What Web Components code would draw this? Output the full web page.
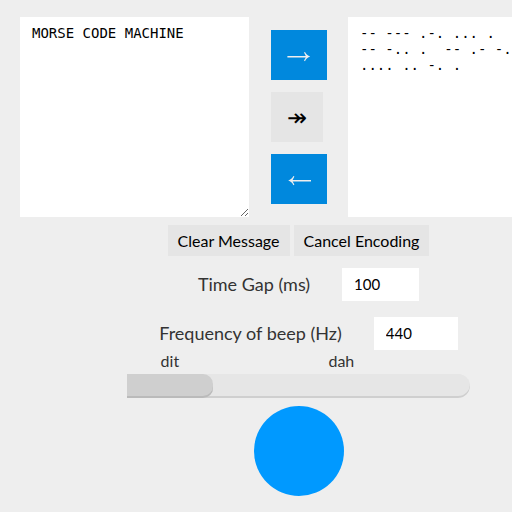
<!DOCTYPE html>
<html lang="en">
<head>
<meta charset="utf-8">
<title>Morse Code Machine</title>
<style>
html { background: #eee; }
body { margin: 0; font-family: Lato, "DejaVu Sans", sans-serif; font-size: 16px; color: #333; }
</style>
</head>
<body>
<morse-app></morse-app>
<script>
class Base extends HTMLElement {
  constructor() {
    super();
    this.attachShadow({ mode: "open" });
  }
  render(html) { this.shadowRoot.innerHTML = html; }
}

customElements.define("morse-text", class extends Base {
  connectedCallback() {
    this.render(`<style>
      :host { display: block; }
      textarea { display: block; box-sizing: border-box; width: 229px; height: 200px; margin: 0; padding: 8px 12px; border: 0; outline: 0; background: #fff; color: #000; font: 14px/16px "DejaVu Sans Mono", monospace; resize: both; white-space: pre; overflow: hidden; }
    </style><textarea aria-label="${this.getAttribute("label")}"></textarea>`);
    this.shadowRoot.querySelector("textarea").value = this.getAttribute("value").replaceAll("|", "\n");
  }
});

customElements.define("morse-arrow", class extends Base {
  connectedCallback() {
    this.render(`<style>
      :host { display: block; }
      button { display: block; height: 50px; margin: 0; padding: 0 16px; border: 0; background: #e5e5e5; color: #000; font: 24px/50px Lato, "DejaVu Sans", sans-serif; }
      :host([primary]) button { background: #08d; color: #eee; }
      ::slotted(svg) { display: block; width: 24px; height: 24px; }
    </style><button type="button" aria-label="${this.getAttribute("label")}"><slot></slot></button>`);
  }
});

customElements.define("morse-button", class extends Base {
  connectedCallback() {
    this.render(`<style>
      :host { display: block; }
      button { display: block; height: 31px; margin: 0; padding: 0 10px; border: 0; background: #e5e5e5; color: #000; font: 16px/31px Lato, sans-serif; }
    </style><button type="button"><slot></slot></button>`);
  }
});

customElements.define("morse-field", class extends Base {
  connectedCallback() {
    this.render(`<style>
      :host { display: flex; align-items: center; justify-content: center; gap: 32px; height: 33px; padding-left: 20px; }
      label { padding-bottom: 2px; font-size: 18px; line-height: 24px; }
      input { box-sizing: border-box; width: var(--field-width, 77px); height: 33px; margin: 0; padding: 0 12px 2px; border: 0; background: #fff; color: #000; font: 15px/20px Lato, sans-serif; }
    </style><label for="f">${this.getAttribute("label")}</label><input id="f" type="text" value="${this.getAttribute("value")}">`);
  }
});

customElements.define("morse-meter", class extends Base {
  connectedCallback() {
    this.render(`<style>
      :host { display: block; width: 343px; }
      .marks { display: grid; grid-template-columns: repeat(4, 1fr); padding-bottom: 2px; text-align: center; line-height: 22px; }
      .marks span:last-child { grid-column: 3; }
      progress { display: block; appearance: none; width: 100%; height: 24px; border: 0; border-radius: 0 12px 12px 0; overflow: hidden; background: #e6e6e6; }
      progress::-webkit-progress-bar { background: #e6e6e6; box-shadow: inset 0 -2px 0 #cfcfcf; border-radius: 0 12px 12px 0; }
      progress::-webkit-progress-value { background: #cfcfcf; box-shadow: inset 0 -2px 0 #bababa; border-radius: 0 10px 10px 0; }
    </style><div class="marks"><span>dit</span><span>dah</span></div><progress max="100" value="25" aria-label="Key press length"></progress>`);
  }
});

customElements.define("morse-key", class extends Base {
  connectedCallback() {
    this.render(`<style>
      :host { display: block; }
      button { display: block; width: 90px; height: 90px; margin: 0; padding: 0; border: 0; border-radius: 50%; background: #09f; }
    </style><button type="button" aria-label="Morse key"></button>`);
  }
});

customElements.define("morse-app", class extends Base {
  connectedCallback() {
    this.render(`<style>
      :host { display: block; padding: 17px 0 16px 20px; overflow: hidden; }
      main { display: flex; flex-direction: column; align-items: center; width: max-content; }
      .panes { display: flex; }
      .arrows { display: flex; flex-direction: column; align-items: flex-start; justify-content: center; gap: 12px; width: 77px; padding-left: 22px; }
      .actions { display: flex; gap: 4px; margin-top: 8px; }
      .fields { display: grid; gap: 16px; margin-top: 12px; }
      .wide { --field-width: 84px; }
      morse-key { margin-top: 8px; }
    </style>
    <main>
      <div class="panes">
        <morse-text label="Message" value="MORSE CODE MACHINE"></morse-text>
        <div class="arrows">
          <morse-arrow primary label="Encode"><svg viewBox="0 0 24 24" fill="currentColor"><path d="M0.4 13h18.4L17 9.6 18 9C19 11.2 20.8 12.8 23.2 13.6 20.8 14.4 19 16 18 18.2L17 17.6 18.8 14.4H0.4z"/></svg></morse-arrow>
          <morse-arrow label="Play">↠</morse-arrow>
          <morse-arrow primary label="Decode"><svg viewBox="0 0 24 24" fill="currentColor"><path d="M24 13H5.6L7.4 9.6 6.4 9C5.4 11.2 3.6 12.8 1.2 13.6 3.6 14.4 5.4 16 6.4 18.2L7.4 17.6 5.6 14.4H24z"/></svg></morse-arrow>
        </div>
        <morse-text label="Morse code" value="-- --- .-. ... .|-- -.. .  -- .- -.|.... .. -. ."></morse-text>
      </div>
      <div class="actions">
        <morse-button>Clear Message</morse-button>
        <morse-button>Cancel Encoding</morse-button>
      </div>
      <div class="fields">
        <morse-field label="Time Gap (ms)" value="100"></morse-field>
        <morse-field class="wide" label="Frequency of beep (Hz)" value="440"></morse-field>
      </div>
      <morse-meter></morse-meter>
      <morse-key></morse-key>
    </main>`);
  }
});
</script>
</body>
</html>
